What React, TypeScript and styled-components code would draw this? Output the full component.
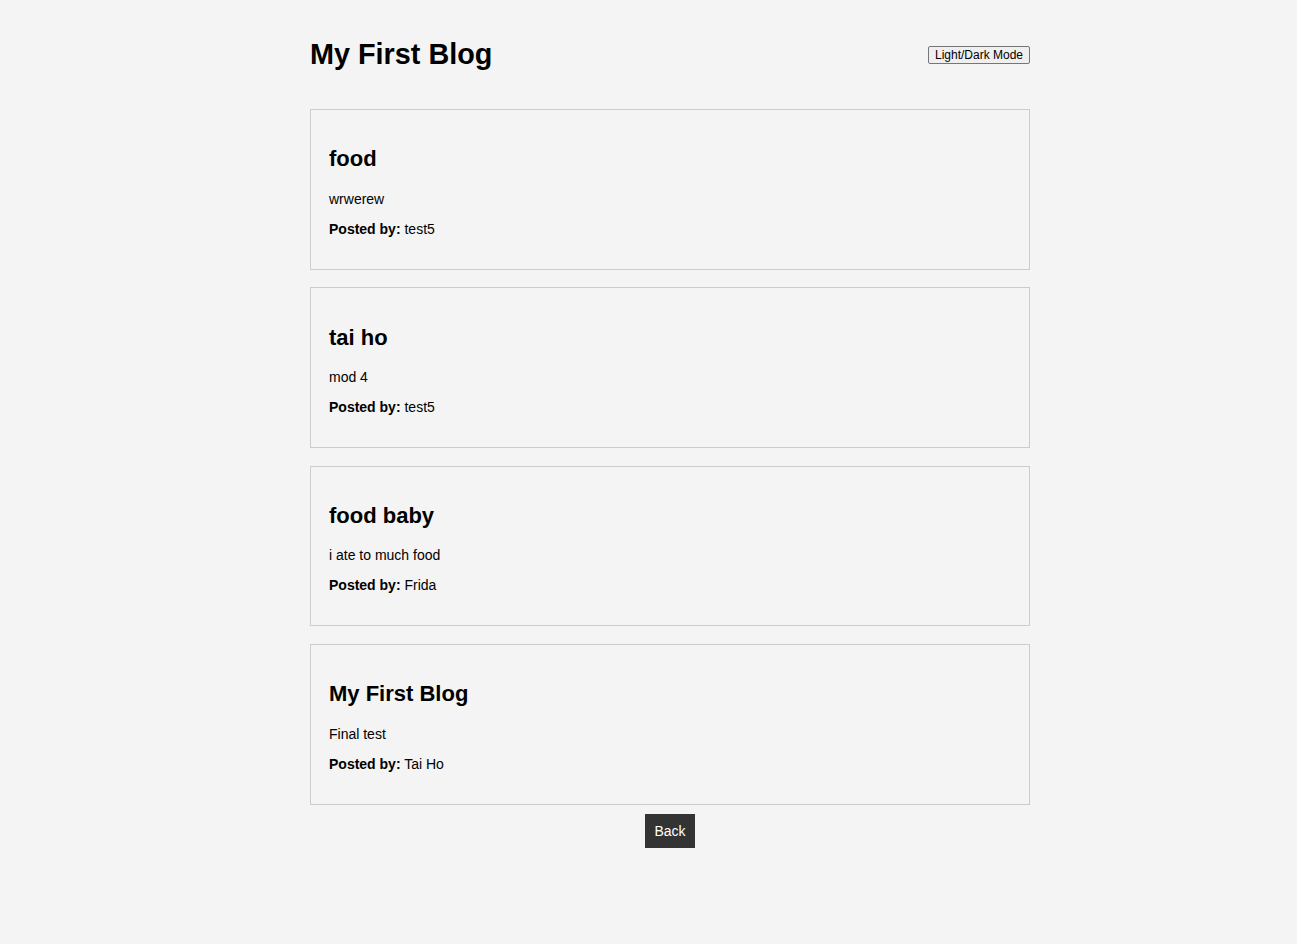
import React from "react";
import styled, { createGlobalStyle } from "styled-components";

const GlobalStyle = createGlobalStyle`
  html, body {
    margin: 0;
    padding: 0;
    background: #f4f4f4;
  }
  body {
    font-family: "Liberation Sans", Arial, sans-serif;
    color: #000;
  }
`;

const Page = styled.div`
  padding-left: 43px;
`;

const Container = styled.div`
  width: 720px;
  margin: 0 auto;
`;

const Header = styled.header`
  display: flex;
  justify-content: space-between;
  align-items: center;
  padding-top: 19px;
  margin-bottom: 19px;
`;

const Title = styled.h1`
  font-size: 28.8px;
  font-weight: bold;
  margin: 19px 0;
  line-height: 33px;
`;

const ModeButton = styled.button`
  font-family: "Liberation Sans", Arial, sans-serif;
  font-size: 12px;
  line-height: 14px;
  padding: 1px 6px;
  border: 1px solid #767676;
  border-radius: 2px;
  background: #efefef;
  color: #000;
  cursor: pointer;
`;

const PostList = styled.div`
  display: flex;
  flex-direction: column;
  gap: 17.9px;
`;

const Card = styled.article`
  border: 1px solid #cccccc;
  padding: 18px;
`;

const PostTitle = styled.h2`
  font-size: 22px;
  font-weight: bold;
  margin: 0.83em 0;
  line-height: normal;
`;

const Text = styled.p`
  font-size: 14px;
  line-height: 16px;
  margin: 1em 0;
`;

const Footer = styled.div`
  display: flex;
  justify-content: center;
  margin-top: 9.5px;
`;

const BackButton = styled.button`
  font-family: "Liberation Sans", Arial, sans-serif;
  font-size: 14px;
  line-height: 16px;
  padding: 9px 9px;
  border: none;
  background: #333333;
  color: #fff;
  cursor: pointer;
`;

const posts = [
  { title: "food", body: "wrwerew", author: "test5" },
  { title: "tai ho", body: "mod 4", author: "test5" },
  { title: "food baby", body: "i ate to much food", author: "Frida" },
  { title: "My First Blog", body: "Final test", author: "Tai Ho" },
];

export default function App() {
  return (
    <>
      <GlobalStyle />
      <Page>
        <Container>
          <Header>
            <Title>My First Blog</Title>
            <ModeButton>Light/Dark Mode</ModeButton>
          </Header>
          <PostList>
            {posts.map((p, i) => (
              <Card key={i}>
                <PostTitle>{p.title}</PostTitle>
                <Text>{p.body}</Text>
                <Text>
                  <strong>Posted by:</strong> {p.author}
                </Text>
              </Card>
            ))}
          </PostList>
          <Footer>
            <BackButton>Back</BackButton>
          </Footer>
        </Container>
      </Page>
    </>
  );
}
